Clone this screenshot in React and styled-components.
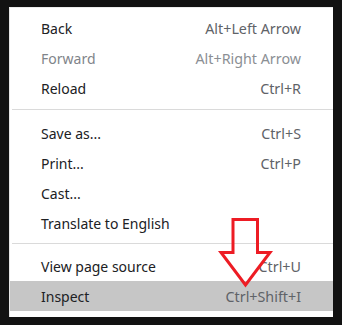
import React from "react";
import styled, { createGlobalStyle } from "styled-components";

const Global = createGlobalStyle`
  html, body { margin: 0; padding: 0; background: #121212; }
  body { font-family: "Noto Sans", "Open Sans", sans-serif; }
`;

const Page = styled.div`
  position: relative;
  width: 342px;
  height: 325px;
  padding: 8px 9px 0 9px;
  box-sizing: border-box;
  background: #121212;
`;

const Menu = styled.div`
  width: 324px;
  background: #fff;
  padding: 5px 0 6px;
  box-sizing: border-box;
  border-left: 1px solid #e6e6e6;
  border-top: 1px solid #ececec;
  margin-top: -1px;
`;

const Item = styled.div`
  display: flex;
  align-items: center;
  justify-content: space-between;
  height: 30px;
  padding: 0 32px 0 31px;
  font-size: 14px;
  color: ${(p) => (p.$disabled ? "#7f848a" : "#202124")};
  background: ${(p) => (p.$active ? "#c6c6c6" : "transparent")};
`;

const Shortcut = styled.span`
  font-size: 14.3px;
  color: ${(p) => (p.$disabled ? "#8b8f94" : "#5f6368")};
`;

const Separator = styled.div`
  height: 1px;
  background: #dadada;
  margin: ${(p) => p.$top}px 0 ${(p) => p.$bottom}px 2px;
`;

const Overlay = styled.svg`
  position: absolute;
  left: 0;
  top: 0;
  pointer-events: none;
`;

const sections = [
  [
    { label: "Back", key: "Alt+Left Arrow" },
    { label: "Forward", key: "Alt+Right Arrow", disabled: true },
    { label: "Reload", key: "Ctrl+R" },
  ],
  [
    { label: "Save as...", key: "Ctrl+S" },
    { label: "Print...", key: "Ctrl+P" },
    { label: "Cast..." },
    { label: "Translate to English" },
  ],
  [
    { label: "View page source", key: "Ctrl+U" },
    { label: "Inspect", key: "Ctrl+Shift+I", active: true },
  ],
];

const seps = [
  { top: 6, bottom: 8 },
  { top: 5, bottom: 7 },
];

export default function App() {
  return (
    <Page>
      <Global />
      <Menu>
        {sections.map((sec, i) => (
          <React.Fragment key={i}>
            {i > 0 && <Separator $top={seps[i - 1].top} $bottom={seps[i - 1].bottom} />}
            {sec.map((it) => (
              <Item key={it.label} $disabled={it.disabled} $active={it.active}>
                <span>{it.label}</span>
                {it.key && <Shortcut $disabled={it.disabled}>{it.key}</Shortcut>}
              </Item>
            ))}
          </React.Fragment>
        ))}
      </Menu>
      <Overlay width="342" height="325" viewBox="0 0 342 325">
        <polygon
          points="233,219.5 257.5,219.5 257.5,252.5 270,252.5 245.5,285 221,252.5 233,252.5"
          fill="none"
          stroke="#ed1c24"
          strokeWidth="3"
          strokeLinejoin="miter"
        />
      </Overlay>
    </Page>
  );
}
